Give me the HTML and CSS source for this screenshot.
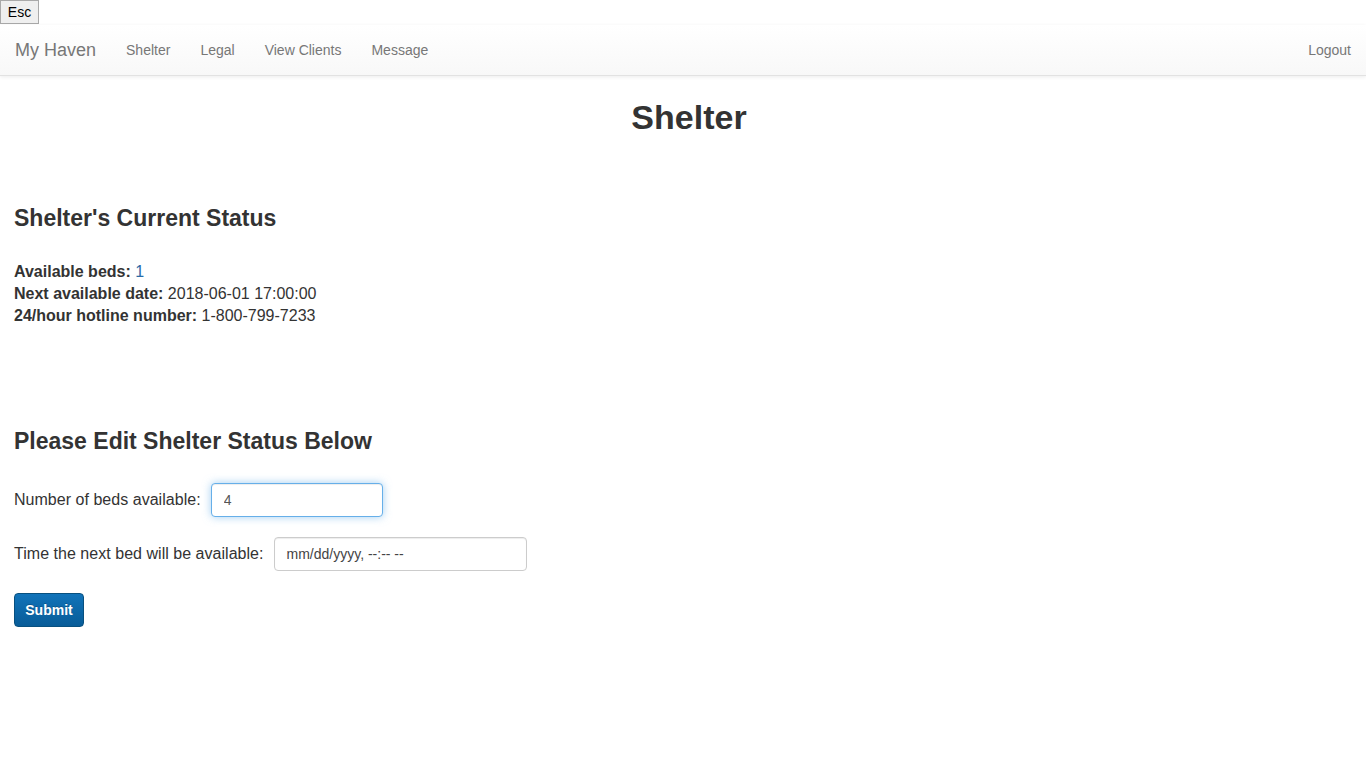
FILE: index.html
```html
<!DOCTYPE html>
<html>
<head>
<meta charset="utf-8">
<title>My Haven - Shelter</title>
<link rel="stylesheet" href="styles.css">
</head>
<body>
<button class="esc">Esc</button>
<nav class="navbar">
  <div class="nav-left">
    <a class="brand" href="#">My Haven</a>
    <a class="nav-link" href="#">Shelter</a>
    <a class="nav-link" href="#">Legal</a>
    <a class="nav-link" href="#">View Clients</a>
    <a class="nav-link" href="#">Message</a>
  </div>
  <a class="nav-link logout" href="#">Logout</a>
</nav>
<main class="content">
  <h1 class="title">Shelter</h1>
  <h3 class="section-title status-title">Shelter's Current Status</h3>
  <div class="status">
    <div><b>Available beds:</b> <span class="beds">1</span></div>
    <div><b>Next available date:</b> 2018-06-01 17:00:00</div>
    <div><b>24/hour hotline number:</b> 1-800-799-7233</div>
  </div>
  <h3 class="section-title edit-title">Please Edit Shelter Status Below</h3>
  <form class="form">
    <div class="row">
      <label>Number of beds available:</label>
      <input class="field focused beds-input" type="text" value="4">
    </div>
    <div class="row">
      <label>Time the next bed will be available:</label>
      <div class="field date-input">mm/dd/yyyy, --:-- --</div>
    </div>
    <button class="submit" type="button">Submit</button>
  </form>
</main>
</body>
</html>
```
FILE: styles.css
```css
html, body {
  margin: 0;
  padding: 0;
  background: #fff;
  font-family: "Liberation Sans", Arial, sans-serif;
  font-size: 14px;
  color: #333;
}
.esc {
  display: block;
  height: 24px;
  width: 39px;
  margin: 0;
  padding: 0;
  border: 1px solid #a9a9a9;
  background: #efefef;
  font-family: "Liberation Sans", Arial, sans-serif;
  font-size: 14px;
  color: #000;
}
.navbar {
  height: 50px;
  margin-top: 1px;
  display: flex;
  justify-content: space-between;
  align-items: center;
  background: linear-gradient(#ffffff, #f8f8f8);
  border-bottom: 1px solid #e2e2e2;
  box-shadow: 0 1px 4px rgba(0,0,0,0.08);
}
.nav-left {
  display: flex;
  align-items: center;
}
.brand {
  font-size: 18px;
  color: #777;
  text-decoration: none;
  padding: 0 15px;
}
.nav-link {
  font-size: 14px;
  color: #777;
  text-decoration: none;
  padding: 0 15px;
}
.content {
  padding: 0 14px;
}
.title {
  text-align: center;
  font-size: 34px;
  font-weight: bold;
  margin: 20px 0 0;
  line-height: 42px;
  padding-left: 12px;
}
.section-title {
  font-size: 23px;
  font-weight: bold;
  margin: 0;
  line-height: 28px;
}
.status-title {
  margin-top: 66px;
}
.status {
  margin-top: 29px;
  line-height: 22px;
  font-size: 16px;
}
.beds {
  color: #2a6aa8;
}
.edit-title {
  margin-top: 100px;
}
.form {
  margin-top: 28px;
}
.row {
  display: flex;
  align-items: center;
  margin-bottom: 20px;
}
.row label {
  font-size: 16px;
  margin-right: 10px;
  letter-spacing: 0.03px;
}
.field {
  box-sizing: border-box;
  height: 34px;
  border: 1px solid #ccc;
  border-radius: 4px;
  font-family: "Liberation Sans", Arial, sans-serif;
  font-size: 14px;
  color: #555;
  padding: 6px 12px;
  background: #fff;
  box-shadow: inset 0 1px 1px rgba(0,0,0,0.075);
}
.beds-input {
  width: 172px;
}
.focused {
  border-color: #66afe9;
  outline: 0;
  box-shadow: inset 0 1px 1px rgba(0,0,0,0.075), 0 0 8px rgba(102,175,233,0.6);
}
.date-input {
  width: 253px;
  line-height: 20px;
  color: #444;
}
.submit {
  display: block;
  width: 70px;
  height: 34px;
  margin-top: 22px;
  border: 1px solid #08507f;
  border-radius: 4px;
  background: linear-gradient(#1173b9, #085c98);
  color: #fff;
  font-family: "Liberation Sans", Arial, sans-serif;
  font-size: 14px;
  font-weight: bold;
  padding: 0;
  text-shadow: 0 -1px 0 rgba(0,0,0,0.2);
}
```
